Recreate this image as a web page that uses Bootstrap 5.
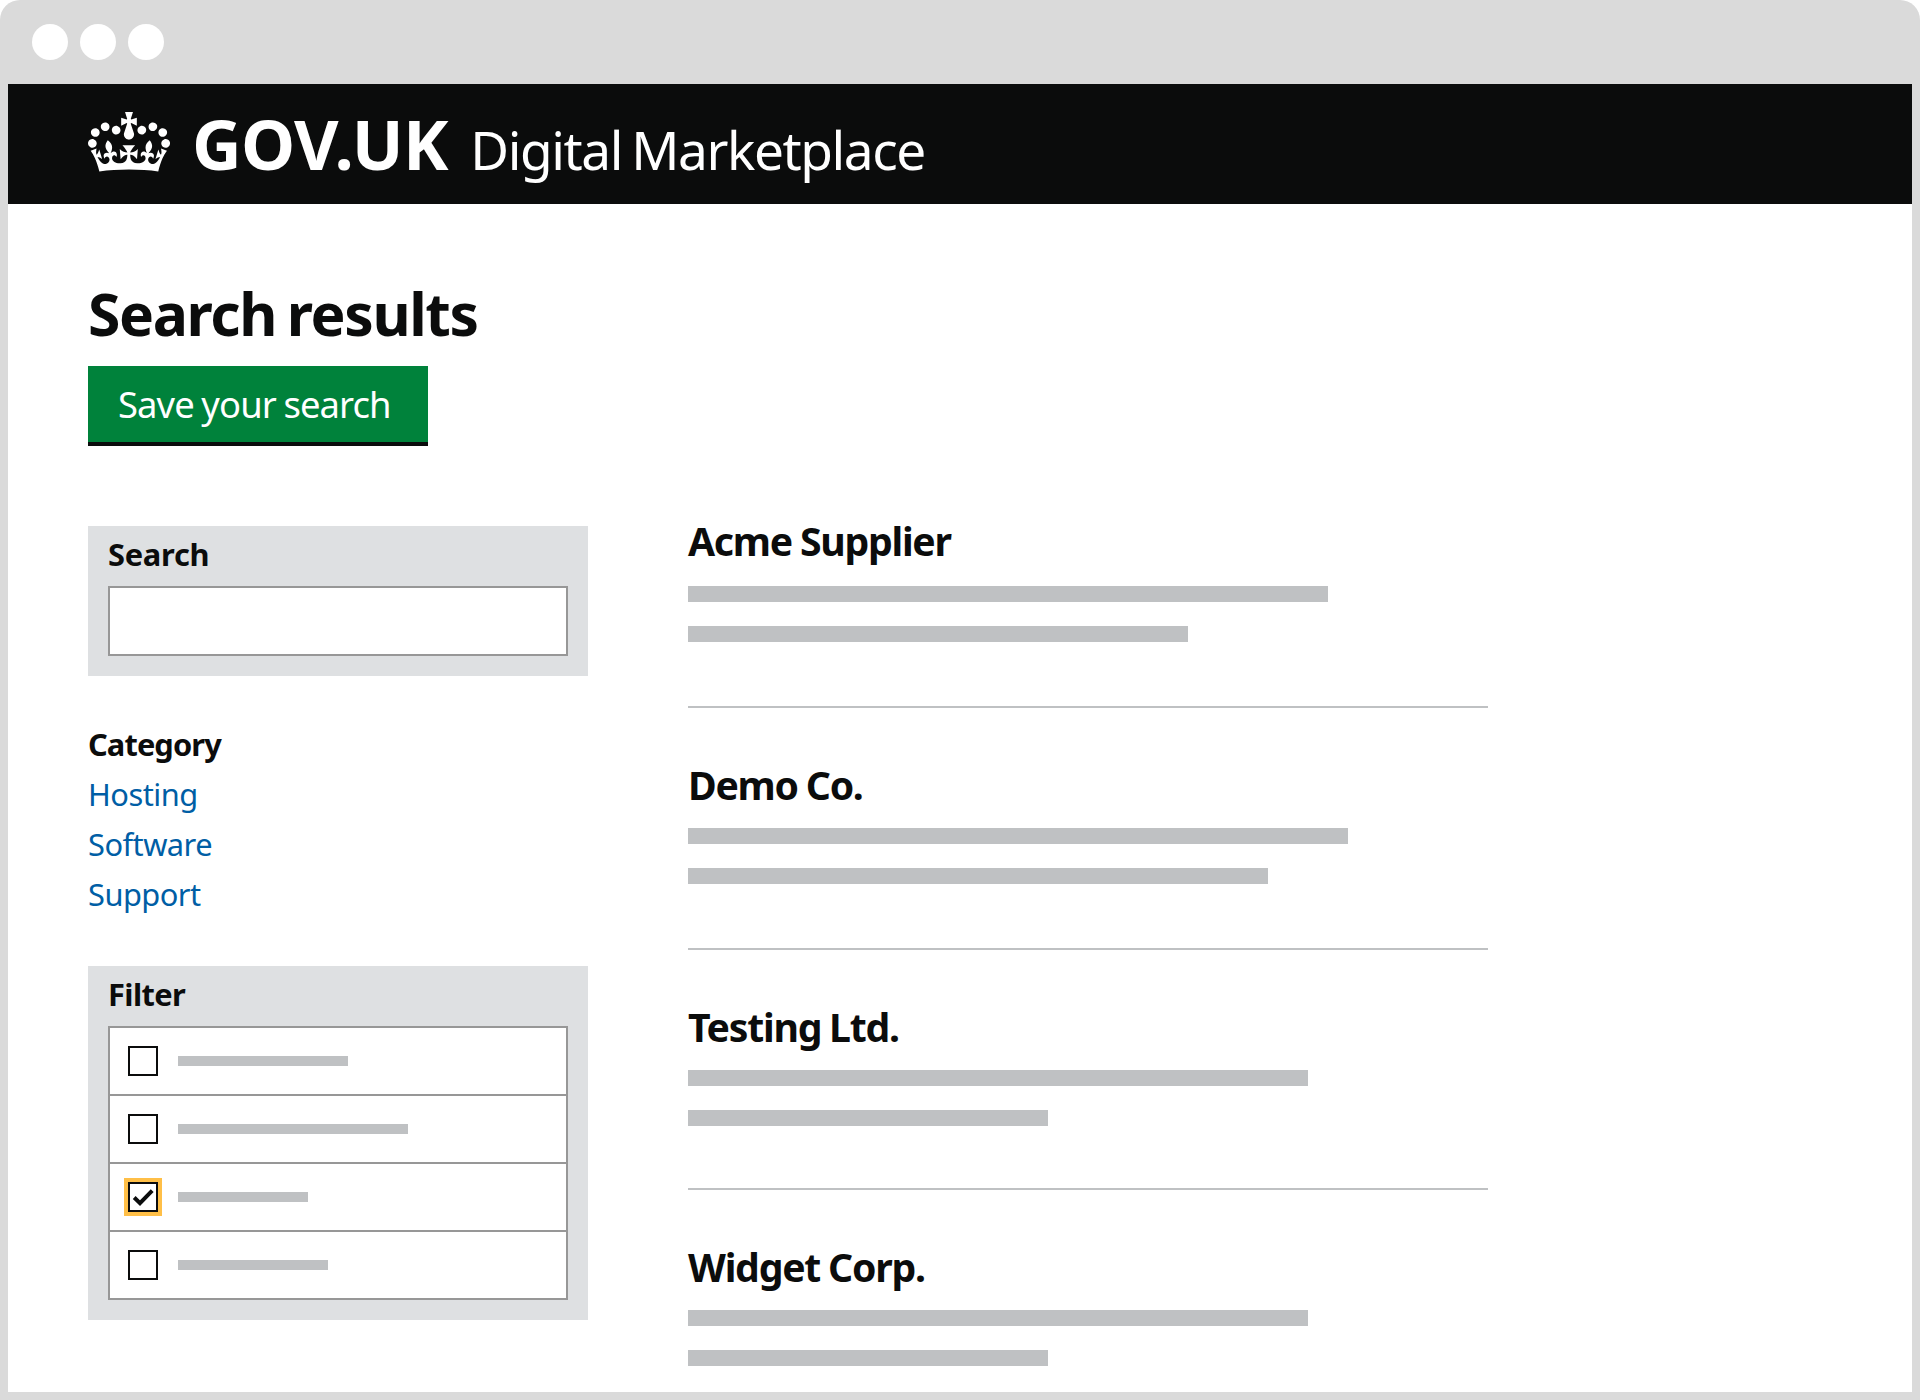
<!DOCTYPE html>
<html lang="en">
<head>
<meta charset="utf-8">
<meta name="viewport" content="width=device-width, initial-scale=1">
<title>Search results - Digital Marketplace</title>
<link href="https://cdn.jsdelivr.net/npm/bootstrap@5.3.0/dist/css/bootstrap.min.css" rel="stylesheet">
<style>
  body { background: #fff; color: #0b0c0c; font-family: "Noto Sans", "Open Sans", sans-serif; }
  .browser { height: 1400px; background: #dadada; border-radius: 20px 20px 0 0; padding: 0 8px 8px; }
  .chrome-bar { height: 84px; padding: 24px 24px 0; gap: 12px; }
  .dot { width: 36px; height: 36px; background: #fff; border-radius: 50%; }
  .page { height: 1308px; }
  .gov-header { height: 120px; background: #0b0c0c; padding-left: 80px; }
  .crown { width: 82px; height: 60px; margin: 28px 22px 0 0; }
  .gov-name { font-size: 68.6px; font-weight: 700; line-height: 119px; letter-spacing: -.64px; margin-right: 22.5px; }
  .service { font-size: 53.2px; line-height: 60px; letter-spacing: -1.45px; word-spacing: -3px; }
  .content-area { padding-left: 80px; }
  .page-title { font-size: 58.8px; font-weight: 700; line-height: 60px; letter-spacing: -1.4px; word-spacing: -3px; margin: 79px 0 23px; }
  .save-btn { width: 340px; height: 80px; background: #00823b; border-bottom: 4px solid #0b0c0c; padding-left: 30px; font-size: 36.4px; line-height: 76px; letter-spacing: -.9px; word-spacing: -1px; }
  .columns { margin-top: 80px; gap: 100px; }
  .sidebar { width: 500px; font-size: 30.8px; }
  .panel { background: #dee0e2; padding: 0 20px 20px; }
  .panel-title { font-size: 30.8px; font-weight: 700; line-height: 56px; letter-spacing: -.25px; margin-bottom: 4px; }
  .panel-title.tight { letter-spacing: -.6px; }
  .search-box { height: 70px; border: 2px solid #979797; }
  .categories { line-height: 50px; margin: 43px 0 47px; letter-spacing: -.52px; }
  .categories .title { font-weight: 700; letter-spacing: -.9px; }
  .categories a { color: #005ea5; }
  .filters { height: 274px; border: 2px solid #979797; }
  .filter-row { height: 68px; padding: 0 18px; gap: 20px; border-bottom: 2px solid #979797; }
  .filter-row:last-child { height: 66px; border-bottom: 0; }
  .check-box { width: 30px; height: 30px; border: 2px solid #0b0c0c; background: #fff; }
  .check-box.focused { box-shadow: 0 0 0 4px #ffbf47; }
  .check-box svg { width: 26px; height: 26px; display: block; }
  .skeleton { background: #bfc1c3; height: 10px; }
  .results { width: 800px; }
  .result { height: 242px; border-bottom: 2px solid #bfc1c3; padding-top: 62px; }
  .result:first-child { height: 182px; padding-top: 0; }
  .result:nth-child(3) { height: 240px; }
  .result:last-child { height: auto; border-bottom: 0; }
  .result h2 { font-size: 39.2px; font-weight: 700; line-height: 30px; letter-spacing: -1.25px; word-spacing: -1px; margin: 0 0 28px; }
  .result:first-child h2 { margin-bottom: 30px; }
  .result .skeleton { height: 16px; margin-bottom: 24px; }
</style>
</head>
<body>
<div class="browser">
  <div class="chrome-bar d-flex">
    <span class="dot"></span><span class="dot"></span><span class="dot"></span>
  </div>
  <div class="page bg-white overflow-hidden">
    <header class="gov-header d-flex align-items-start text-white text-nowrap">
      <svg class="crown flex-shrink-0" viewBox="0 0 132 97" preserveAspectRatio="none" aria-hidden="true"><path fill="#fff" fill-rule="evenodd" d="M25 30.2c3.5 1.5 7.7-.2 9.1-3.7 1.5-3.6-.2-7.8-3.9-9.2-3.6-1.4-7.6.3-9.1 3.9-1.4 3.5.3 7.5 3.9 9zM9 39.5c3.6 1.5 7.8-.2 9.2-3.7 1.5-3.6-.2-7.8-3.9-9.1-3.6-1.5-7.6.2-9.1 3.8-1.4 3.5.3 7.5 3.8 9zM4.4 57.2c3.5 1.5 7.7-.2 9.1-3.8 1.5-3.6-.2-7.7-3.9-9.1-3.5-1.5-7.6.3-9.1 3.8-1.4 3.5.3 7.6 3.9 9.1zm38.3-21.4c3.5 1.5 7.7-.2 9.1-3.8 1.5-3.6-.2-7.7-3.9-9.1-3.6-1.5-7.6.3-9.1 3.8-1.3 3.6.4 7.7 3.9 9.1zm64.4-5.6c-3.6 1.5-7.8-.2-9.1-3.7-1.5-3.6.2-7.8 3.8-9.2 3.6-1.4 7.7.3 9.2 3.9 1.3 3.5-.4 7.5-3.9 9zm15.9 9.3c-3.6 1.5-7.7-.2-9.1-3.7-1.5-3.6.2-7.8 3.7-9.1 3.6-1.5 7.7.2 9.2 3.8 1.5 3.5-.3 7.5-3.8 9zm4.7 17.7c-3.6 1.5-7.8-.2-9.2-3.8-1.5-3.6.2-7.7 3.9-9.1 3.6-1.5 7.7.3 9.2 3.8 1.3 3.5-.4 7.6-3.9 9.1zM89.3 35.8c-3.6 1.5-7.8-.2-9.2-3.8-1.4-3.6.2-7.7 3.9-9.1 3.6-1.5 7.7.3 9.2 3.8 1.4 3.6-.3 7.7-3.9 9.1zM69.7 17.7l8.9 4.7V9.3l-8.9 2.8c-.2-.3-.5-.6-.9-.9L72.4 0H59.6l3.5 11.2c-.3.3-.6.5-.9.9l-8.8-2.8v13.1l8.8-4.7c.3.3.6.7.9.9l-5 15.4v.1c-.2.8-.4 1.6-.4 2.4 0 4.1 3.1 7.5 7 8.1h.2c.3 0 .7.1 1 .1.4 0 .7 0 1-.1h.2c4-.6 7.1-4.1 7.1-8.1 0-.8-.1-1.7-.4-2.4V34l-5.1-15.4c.4-.2.7-.6 1-.9zM66 92.8c16.9 0 32.8 1.1 47.1 3.2 4-16.9 8.9-26.7 14-33.5l-9.6-3.4c1 4.9 1.1 7.2 0 10.2-1.5-1.4-3-4.3-4.2-8.7L108.6 76c2.8-2 5-3.2 7.5-3.3-4.4 9.4-10 11.9-13.6 11.2-4.3-.8-6.3-4.6-5.6-7.9 1-4.7 5.7-5.9 8-.5 4.3-8.7-3-11.4-7.6-8.8 7.1-7.2 7.9-13.5 2.1-21.1-8 6.1-8.1 12.3-4.5 20.8-4.7-5.4-12.1-2.5-9.5 6.2 3.4-5.2 7.9-2 7.2 3.1-.6 4.3-6.4 7.8-13.5 7.2-10.3-.9-10.9-8-11.2-13.8 2.5-.5 7.1 1.8 11 7.3L80.2 60c-4.1 4.4-8 5.3-12.3 5.4 1.4-4.4 8-11.6 8-11.6H55.5s6.4 7.2 7.9 11.6c-4.2-.1-8-1-12.3-5.4l1.4 16.4c3.9-5.5 8.5-7.7 10.9-7.3-.3 5.8-.9 12.8-11.1 13.8-7.2.6-12.9-2.9-13.5-7.2-.7-5 3.8-8.3 7.1-3.1 2.7-8.7-4.6-11.6-9.4-6.2 3.7-8.5 3.6-14.7-4.6-20.8-5.8 7.6-5 13.9 2.2 21.1-4.7-2.6-11.9.1-7.7 8.8 2.3-5.5 7.1-4.2 8.1.5.7 3.3-1.3 7.1-5.7 7.9-3.5.7-9-1.8-13.5-11.2 2.5.1 4.7 1.3 7.5 3.3l-4.7-15.4c-1.2 4.4-2.7 7.2-4.3 8.7-1.1-3-.9-5.3 0-10.2l-9.5 3.4c5 6.9 9.9 16.7 14 33.5 14.8-2.1 30.8-3.2 47.7-3.2z"/></svg>
      <div class="d-flex align-items-baseline">
        <span class="gov-name">GOV.UK</span>
        <span class="service">Digital Marketplace</span>
      </div>
    </header>
    <main class="content-area">
      <h1 class="page-title">Search results</h1>
      <button type="button" class="save-btn btn btn-success rounded-0 border-top-0 border-start-0 border-end-0 py-0 pe-0 text-start d-block">Save your search</button>
      <div class="columns d-flex align-items-start">
        <aside class="sidebar">
          <section class="panel">
            <div class="panel-title">Search</div>
            <div class="search-box bg-white"></div>
          </section>
          <nav class="categories">
            <div class="title">Category</div>
            <a class="d-block text-decoration-none" href="#">Hosting</a>
            <a class="d-block text-decoration-none" href="#">Software</a>
            <a class="d-block text-decoration-none" href="#">Support</a>
          </nav>
          <section class="panel">
            <div class="panel-title tight">Filter</div>
            <div class="filters bg-white">
              <div class="filter-row d-flex align-items-center"><span class="check-box"></span><span class="skeleton" style="width:170px"></span></div>
              <div class="filter-row d-flex align-items-center"><span class="check-box"></span><span class="skeleton" style="width:230px"></span></div>
              <div class="filter-row d-flex align-items-center"><span class="check-box focused"><svg viewBox="0 0 26 26" aria-hidden="true"><path d="M4.2 13.5 10 19.2 22.2 6.7" fill="none" stroke="#0b0c0c" stroke-width="4"/></svg></span><span class="skeleton" style="width:130px"></span></div>
              <div class="filter-row d-flex align-items-center"><span class="check-box"></span><span class="skeleton" style="width:150px"></span></div>
            </div>
          </section>
        </aside>
        <div class="results">
          <article class="result"><h2>Acme Supplier</h2><div class="skeleton" style="width:640px"></div><div class="skeleton" style="width:500px"></div></article>
          <article class="result"><h2>Demo Co.</h2><div class="skeleton" style="width:660px"></div><div class="skeleton" style="width:580px"></div></article>
          <article class="result"><h2>Testing Ltd.</h2><div class="skeleton" style="width:620px"></div><div class="skeleton" style="width:360px"></div></article>
          <article class="result"><h2>Widget Corp.</h2><div class="skeleton" style="width:620px"></div><div class="skeleton" style="width:360px"></div></article>
        </div>
      </div>
    </main>
  </div>
</div>
<script src="https://cdn.jsdelivr.net/npm/bootstrap@5.3.0/dist/js/bootstrap.bundle.min.js"></script>
</body>
</html>
